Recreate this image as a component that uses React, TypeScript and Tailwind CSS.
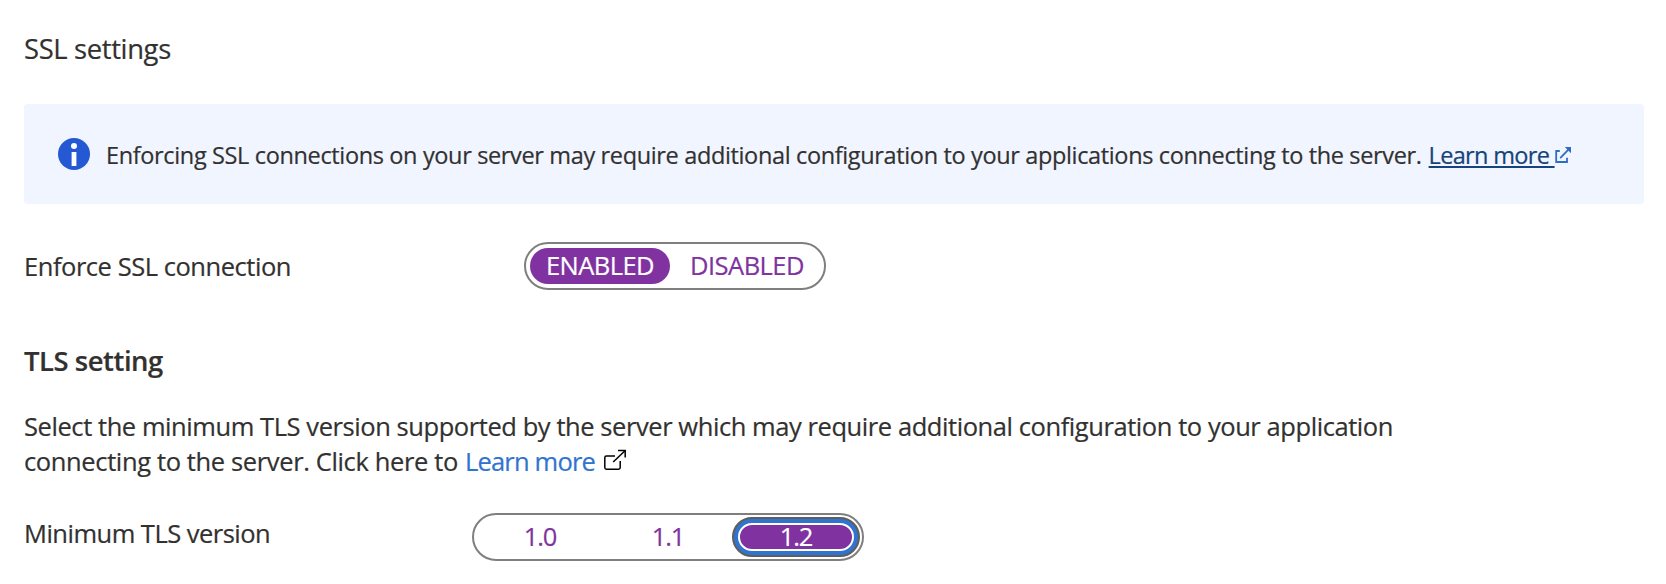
import React from "react";

function InfoIcon() {
  return (
    <svg className="size-8 shrink-0" viewBox="0 0 32 32">
      <circle cx="16" cy="16" r="16" fill="#2459d3" />
      <circle cx="16" cy="8" r="3" fill="#fff" />
      <rect x="13.6" y="14" width="4.8" height="14" fill="#fff" />
    </svg>
  );
}

function LinkIcon() {
  return (
    <svg className="size-4 shrink-0" viewBox="0 0 16 16" fill="none" stroke="#2f6cc4" strokeWidth="1.8">
      <path d="M4.8 4H1.2V15H12V10.8" />
      <path d="M5.2 11.2L13.6 2.4" />
      <path d="M9.8 0H16V6.2Z" fill="#2f6cc4" stroke="none" />
    </svg>
  );
}

function ExternalIcon() {
  return (
    <svg className="h-[22px] w-6 shrink-0" viewBox="0 0 24 22" fill="none" stroke="#000" strokeWidth="1.5">
      <path d="M12 7.1H3.4a1.6 1.6 0 0 0-1.6 1.6V18.6a1.6 1.6 0 0 0 1.6 1.6H15.6a1.6 1.6 0 0 0 1.6-1.6V12" />
      <path d="M10.2 13L22 1.7" />
      <path d="M15 1.4H22.2V8.6" />
    </svg>
  );
}

export default function App() {
  return (
    <main className="h-[584px] w-full overflow-hidden bg-white pl-6 font-['Open_Sans',sans-serif] text-[25.5px] text-[#323130] [-webkit-text-stroke:0.2px]">
      <h2 className="pt-[31px] text-[27.4px] leading-9 tracking-[-0.35px]">SSL settings</h2>

      <div className="mt-[37px] flex h-[100px] w-[1620px] items-center rounded bg-[#f0f5ff] pl-[34px] text-[23.5px]">
        <InfoIcon />
        <div className="ml-4 flex items-center pt-0.5 leading-9 whitespace-nowrap">
          <span className="tracking-[-0.355px]">
            Enforcing SSL connections on your server may require additional configuration to your applications connecting to the server.
          </span>
          <a className="ml-[7px] tracking-[-0.68px] whitespace-pre text-[#15437a] underline decoration-2 underline-offset-2">{"Learn more "}</a>
          <LinkIcon />
        </div>
      </div>

      <div className="mt-[38px] flex h-12 items-center">
        <span className="w-[500px] pt-px tracking-[-0.46px]">Enforce SSL connection</span>
        <div className="flex h-12 w-[302px] items-center rounded-full border-2 border-[#7f7f7f] px-1">
          <button className="flex h-9 w-[140px] items-center justify-center rounded-full bg-[#8033a0] pb-0.5 tracking-[-0.57px] text-white">ENABLED</button>
          <button className="flex h-9 flex-1 items-center justify-center pb-0.5 pl-1 tracking-[-0.54px] text-[#8033a0]">DISABLED</button>
        </div>
      </div>

      <h3 className="mt-[53px] text-[27.4px] leading-9 font-semibold tracking-[-0.43px]">TLS setting</h3>

      <div className="mt-[30px] leading-[35px] whitespace-nowrap">
        <p className="tracking-[-0.429px]">
          Select the minimum TLS version supported by the server which may require additional configuration to your application
        </p>
        <p className="flex items-center">
          <span className="tracking-[-0.37px]">connecting to the server. Click here to</span>
          <a className="ml-[7px] tracking-[-0.8px] text-[#2f74d0]">Learn more</a>
          <span className="ml-2 pb-[3px]"><ExternalIcon /></span>
        </p>
      </div>

      <div className="mt-[34px] flex h-12 items-center">
        <span className="w-[448px] pb-2 tracking-[-0.51px]">Minimum TLS version</span>
        <div className="flex h-12 w-[392px] items-center rounded-full border-2 border-[#7f7f7f] px-0.5">
          <button className="flex h-10 w-32 items-center justify-center pb-0.5 tracking-[-1.2px] text-[#8033a0]">1.0</button>
          <button className="flex h-10 w-32 items-center justify-center pb-0.5 tracking-[-1.2px] text-[#8033a0]">1.1</button>
          <button className="flex h-10 w-32 rounded-full border-2 border-[#605e5c] bg-[#2f74d0] p-1">
            <span className="flex h-7 w-full items-center justify-center rounded-full border-2 border-white bg-[#8033a0] pb-0.5 tracking-[-1.2px] text-white">1.2</span>
          </button>
        </div>
      </div>
    </main>
  );
}
